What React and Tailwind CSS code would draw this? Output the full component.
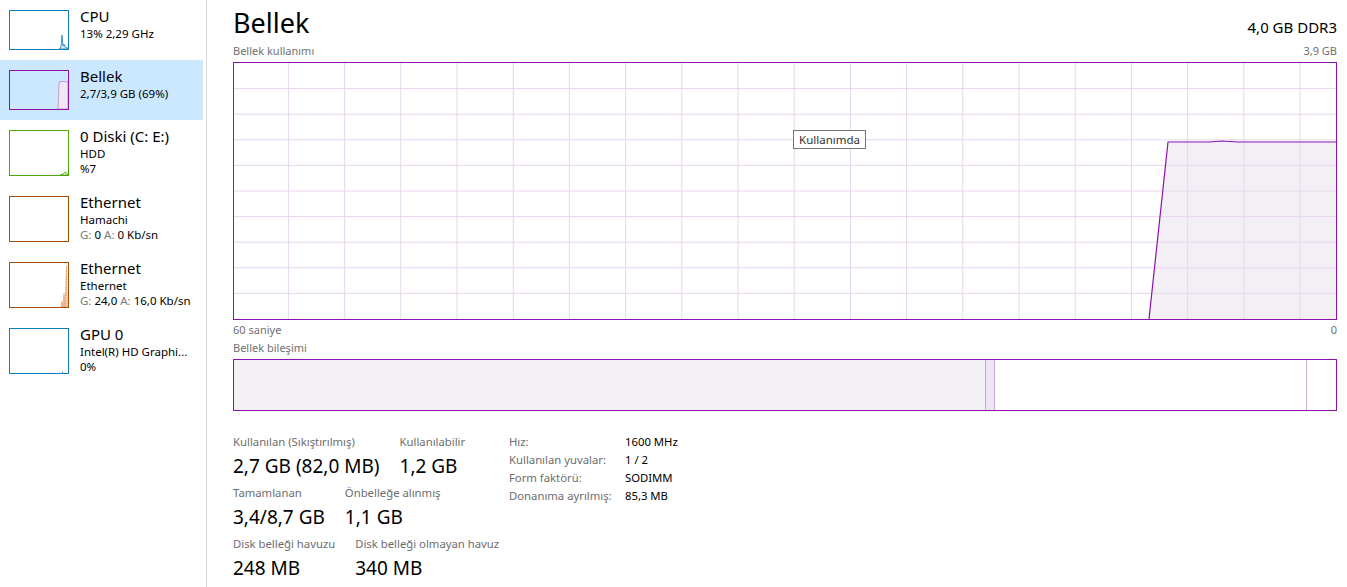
const PURPLE = '#8b12ae';

const Thumb = ({ color, h, children }) => (
  <div className="w-[60px] shrink-0 border" style={{ borderColor: color, height: h }}>
    <svg viewBox={`0 0 58 ${h - 2}`} width="58" height={h - 2} className="block">
      {children}
    </svg>
  </div>
);

const SideItem = ({ title, lines, color, selected, graph }) => {
  const h = lines.length > 1 ? 46 : 40;
  return (
    <div className={`flex w-[203px] pl-[9px] py-[10px] ${selected ? 'bg-[#cce8ff]' : ''}`}>
      <Thumb color={color} h={h}>{graph}</Thumb>
      <div className="pl-[11px] -mt-[3px] h-0">
        <div className="text-[15px] leading-[19px] text-black whitespace-nowrap">{title}</div>
        {lines.map((l, i) => (
          <div key={i} className="text-[11.5px] leading-[15px] text-black whitespace-nowrap">{l}</div>
        ))}
      </div>
    </div>
  );
};

const Sidebar = () => (
  <div className="w-[207px] shrink-0 border-r border-[#d9d9d9] h-[587px]">
    <SideItem
      title="CPU"
      lines={['13%  2,29 GHz']}
      color="#117dbb"
      graph={
        <polygon
          points="49,38 50,37 51,36 52,24 53,35 54,33 55,36 57,37 58,37 58,38"
          fill="#d9eaf6"
          stroke="#117dbb"
          strokeWidth="0.8"
        />
      }
    />
    <SideItem
      title="Bellek"
      lines={['2,7/3,9 GB (69%)']}
      color={PURPLE}
      selected
      graph={
        <polygon points="48,38 49,11 52,10.5 58,11 58,38" fill="#f1e6f4" stroke="#b98bc9" strokeWidth="0.8" />
      }
    />
    <SideItem
      title="0 Diski (C: E:)"
      lines={['HDD', '%7']}
      color="#4da60c"
      graph={<polygon points="50,44 53,43 55,41 57,42 58,44" fill="#dbefcc" stroke="#4da60c" strokeWidth="0.8" />}
    />
    <SideItem
      title="Ethernet"
      lines={['Hamachi', <span key="a"><span className="text-[#7a7a7a]">G:</span> 0 <span className="text-[#7a7a7a]">A:</span> 0 Kb/sn</span>]}
      color="#a74f01"
    />
    <SideItem
      title="Ethernet"
      lines={['Ethernet', <span key="b"><span className="text-[#7a7a7a]">G:</span> 24,0 <span className="text-[#7a7a7a]">A:</span> 16,0 Kb/sn</span>]}
      color="#a74f01"
      graph={
        <>
          <polygon points="51,44 52,38 53,44 54,30 55,44 56.5,3 57.5,44" fill="#f2cdb2" />
          <polyline points="51,44 52,38 53,44 54,30 55,44 56.5,3 57.5,44" fill="none" stroke="#d0702e" strokeWidth="0.6" strokeDasharray="1 0.6" />
        </>
      }
    />
    <SideItem
      title="GPU 0"
      lines={['Intel(R) HD Graphi...', '0%']}
      color="#117dbb"
      graph={<rect x="52" y="43" width="1" height="1" fill="#117dbb" />}
    />
  </div>
);

const vLines = Array.from({ length: 19 }, (_, k) => 1066 - 56.2 * k);
const hLines = Array.from({ length: 9 }, (_, k) => 25.6 * (k + 1));

const UsageChart = () => (
  <div className="relative h-[258px] border border-[#8b12ae]">
    <svg viewBox="0 0 1102 256" preserveAspectRatio="none" className="w-full h-full block">
      <polygon points="915,256 934,79 975,79 988,78 1004,79 1102,79 1102,256" fill="#f2f0f4" />
      {vLines.map((x) => (
        <line key={x} x1={x} y1="0" x2={x} y2="256" stroke="#e8d6ee" strokeWidth="1" />
      ))}
      {hLines.map((y) => (
        <line key={y} x1="0" y1={y} x2="1102" y2={y} stroke="#e8d6ee" strokeWidth="1" />
      ))}
      <polyline points="915,256 934,79 975,79 988,78 1004,79 1102,79" fill="none" stroke={PURPLE} strokeWidth="1.2" />
    </svg>
    <div className="absolute left-[559px] top-[67px] w-[73px] h-[19px] border border-[#767676] bg-white text-[11.5px] leading-[17px] text-[#333] text-center">
      Kullanımda
    </div>
  </div>
);

const CompositionBar = () => (
  <div className="flex h-[52px] border border-[#8b12ae]">
    <div className="w-[752px] bg-[#f2f0f4] border-r border-[#c9a6d4]" />
    <div className="w-[9px] bg-[#efe4f2] border-r border-[#c9a6d4]" />
    <div className="w-[312px] border-r border-[#c9b2d2]" />
    <div className="flex-1" />
  </div>
);

const Stat = ({ label, value }) => (
  <div>
    <div className="text-[11.3px] leading-[16px] text-[#6d6d6d] whitespace-nowrap">{label}</div>
    <div className="text-[19px] leading-[26px] text-black whitespace-nowrap mt-[3px]">{value}</div>
  </div>
);

const Detail = ({ label, value }) => (
  <div className="flex text-[11.3px] leading-[18px]">
    <div className="w-[116px] text-[#6d6d6d]">{label}</div>
    <div className="text-black">{value}</div>
  </div>
);

export default function App() {
  return (
    <div className="flex w-[1347px] h-[587px] bg-white overflow-hidden" style={{ fontFamily: '"Noto Sans", "Open Sans", sans-serif' }}>
      <Sidebar />
      <div className="flex-1 pl-[26px] pr-[10px]">
        <div className="flex items-baseline justify-between pt-[8px]">
          <div className="text-[27px] leading-[30px] text-black">Bellek</div>
          <div className="text-[15px] text-black">4,0 GB DDR3</div>
        </div>
        <div className="flex justify-between text-[11px] leading-[15px] text-[#707070] mt-[4px] mb-[4px]">
          <span>Bellek kullanımı</span>
          <span>3,9 GB</span>
        </div>
        <UsageChart />
        <div className="flex justify-between text-[11px] leading-[15px] text-[#707070] mt-[2px]">
          <span>60 saniye</span>
          <span>0</span>
        </div>
        <div className="text-[11px] leading-[15px] text-[#707070] mt-[3px] mb-[4px]">Bellek bileşimi</div>
        <CompositionBar />
        <div className="flex mt-[23px]">
          <div className="w-[276px] flex flex-col gap-[6px]">
            <div className="flex gap-[20px]">
              <Stat label="Kullanılan (Sıkıştırılmış)" value="2,7 GB (82,0 MB)" />
              <Stat label="Kullanılabilir" value="1,2 GB" />
            </div>
            <div className="flex gap-[20px]">
              <Stat label="Tamamlanan" value="3,4/8,7 GB" />
              <Stat label="Önbelleğe alınmış" value="1,1 GB" />
            </div>
            <div className="flex gap-[20px]">
              <Stat label="Disk belleği havuzu" value="248 MB" />
              <Stat label="Disk belleği olmayan havuz" value="340 MB" />
            </div>
          </div>
          <div className="-mt-[1px]">
            <Detail label="Hız:" value="1600 MHz" />
            <Detail label="Kullanılan yuvalar:" value="1 / 2" />
            <Detail label="Form faktörü:" value="SODIMM" />
            <Detail label="Donanıma ayrılmış:" value="85,3 MB" />
          </div>
        </div>
      </div>
    </div>
  );
}
